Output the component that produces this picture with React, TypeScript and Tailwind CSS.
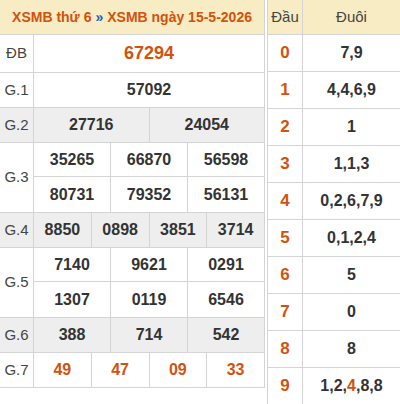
import React from 'react';

type Row = { label: string; lines: string[][]; gray?: boolean; big?: boolean; red?: boolean };

const rows: Row[] = [
  { label: 'ĐB', lines: [['67294']], big: true },
  { label: 'G.1', lines: [['57092']] },
  { label: 'G.2', lines: [['27716', '24054']], gray: true },
  { label: 'G.3', lines: [['35265', '66870', '56598'], ['80731', '79352', '56131']] },
  { label: 'G.4', lines: [['8850', '0898', '3851', '3714']], gray: true },
  { label: 'G.5', lines: [['7140', '9621', '0291'], ['1307', '0119', '6546']] },
  { label: 'G.6', lines: [['388', '714', '542']], gray: true },
  { label: 'G.7', lines: [['49', '47', '09', '33']], red: true },
];

const loto: [string, React.ReactNode][] = [
  ['0', '7,9'],
  ['1', '4,4,6,9'],
  ['2', '1'],
  ['3', '1,1,3'],
  ['4', '0,2,6,7,9'],
  ['5', '0,1,2,4'],
  ['6', '5'],
  ['7', '0'],
  ['8', '8'],
  ['9', <>1,2,<span className="text-[#d2520e]">4</span>,8,8</>],
];

const App = () => {
  return (
    <div className="flex w-[400px] h-[404px] overflow-hidden bg-white text-[#333] font-['Liberation_Sans',Arial,sans-serif]">
      {/* Kết quả */}
      <div className="w-[265px] border-r border-[#d4d4d4] self-start">
        <div className="h-[35px] flex items-center justify-center bg-[#f8ecc4] border-b border-[#d4d4d4] text-[14px] font-bold text-[#d2520e]">
          XSMB thứ 6 <span className="text-[#1d5fae] mx-1">»</span> XSMB ngày 15-5-2026
        </div>
        {rows.map((r) => (
          <div key={r.label} className={`flex border-b border-[#d4d4d4] ${r.gray ? 'bg-[#eeeeee]' : ''}`}>
            <div className="w-[34px] shrink-0 border-r border-[#d4d4d4] flex items-center justify-center text-[15px] text-[#444]">
              {r.label}
            </div>
            <div className="flex-1 flex flex-col">
              {r.lines.map((line, i) => (
                <div
                  key={i}
                  className={`flex ${r.big ? 'h-[37px]' : 'h-[34px]'} ${i < r.lines.length - 1 ? 'border-b border-[#d4d4d4]' : ''} ${i > 0 ? 'h-[35px]' : ''}`}
                >
                  {line.map((n, j) => (
                    <div
                      key={j}
                      className={`flex-1 flex items-center justify-center font-bold ${j > 0 ? 'border-l border-[#d4d4d4]' : ''} ${
                        r.big ? 'text-[18px] text-[#d2520e]' : r.red ? 'text-[16px] text-[#d2520e]' : 'text-[16px]'
                      }`}
                    >
                      {n}
                    </div>
                  ))}
                </div>
              ))}
            </div>
          </div>
        ))}
      </div>

      {/* Lô tô */}
      <div className="ml-[2px] flex-1 border-l border-[#d4d4d4]">
        <div className="flex h-[35px] bg-[#f8ecc4] border-b border-[#d4d4d4] text-[15px] text-[#444]">
          <div className="w-[35px] border-r border-[#d4d4d4] flex items-center justify-center">Đầu</div>
          <div className="flex-1 flex items-center justify-center">Đuôi</div>
        </div>
        {loto.map(([d, v]) => (
          <div key={d} className="flex h-[37px] border-b border-[#d4d4d4]">
            <div className="w-[35px] border-r border-[#d4d4d4] flex items-center justify-center text-[17px] font-bold text-[#d2520e]">
              {d}
            </div>
            <div className="flex-1 flex items-center justify-center text-[16px] font-bold">{v}</div>
          </div>
        ))}
      </div>
    </div>
  );
};

export default App;
